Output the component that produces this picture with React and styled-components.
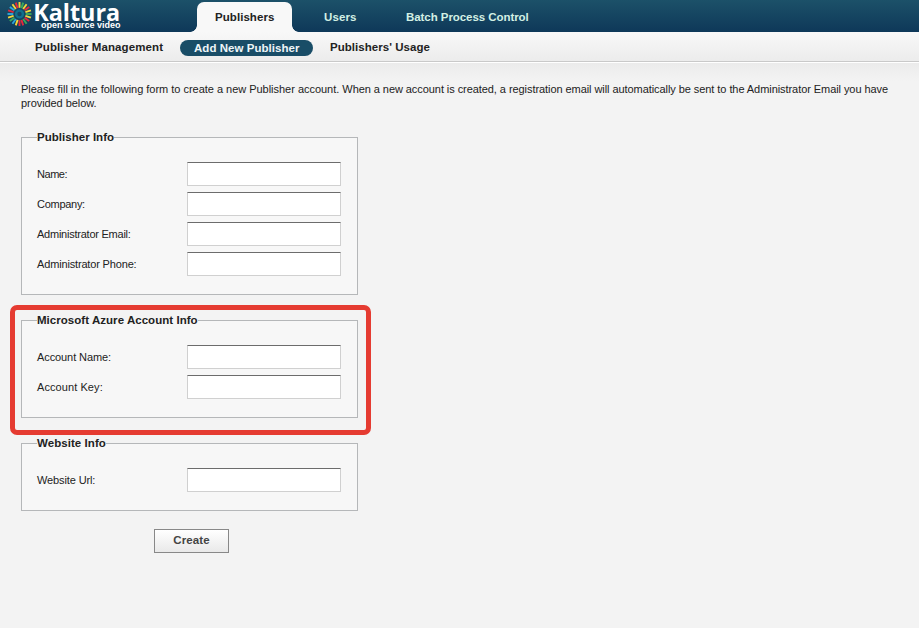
import React from "react";
import styled, { createGlobalStyle } from "styled-components";

const GlobalStyle = createGlobalStyle`
  * { box-sizing: border-box; }
  body {
    margin: 0;
    min-height: 628px;
    background: #f3f3f3;
    color: #222;
    font: 11px/14px "Liberation Sans", Arial, sans-serif;
  }
`;

const Header = styled.header`
  display: flex;
  height: 32px;
  background: linear-gradient(#1c5169, #0e3859);
`;

const Logo = styled.svg`
  display: block;
  flex: none;
  width: 186px;
  height: 32px;
`;

const TabList = styled.nav`
  display: flex;
  align-items: flex-end;
  padding-left: 11px;
`;

const Tab = styled.a`
  position: relative;
  width: ${(p) => p.$width}px;
  height: 30px;
  padding: 8px 0 0 ${(p) => p.$inset}px;
  border-radius: 7px 7px 0 0;
  font-size: 11.5px;
  font-weight: bold;
  white-space: nowrap;
  letter-spacing: ${(p) => p.$tracking}px;
  color: ${(p) => (p.$active ? "#222" : "#d3f0e4")};
  background: ${(p) => (p.$active ? "#f8f8f8" : "transparent")};

  &::before,
  &::after {
    content: "";
    display: ${(p) => (p.$active ? "block" : "none")};
    position: absolute;
    bottom: 0;
    width: 7px;
    height: 7px;
  }
  &::before {
    right: 100%;
    background: radial-gradient(circle at 0 0, transparent 6.5px, #f8f8f8 7.2px);
  }
  &::after {
    left: 100%;
    background: radial-gradient(circle at 100% 0, transparent 6.5px, #f8f8f8 7.2px);
  }
`;

const SubNav = styled.nav`
  display: flex;
  align-items: flex-start;
  height: 30px;
  padding: 8px 0 0 35px;
  background: linear-gradient(#f8f8f8, #ececec);
  border-bottom: 1px solid #c9c9c9;
`;

const SubLink = styled.a`
  width: ${(p) => p.$width}px;
  font-size: 11.5px;
  font-weight: bold;
  white-space: nowrap;
  letter-spacing: ${(p) => p.$tracking}px;
`;

const ActivePill = styled(SubLink)`
  height: 16px;
  margin-right: 17px;
  padding: 1px 0 0 14px;
  border-radius: 8px;
  color: #eef5f7;
  background: #194d67;
`;

const Content = styled.main`
  padding: 19px 20px 0 21px;
  border-top: 1px solid #fff;
  background: linear-gradient(#ebebeb, #f3f3f3 18px);
`;

const Intro = styled.p`
  width: 872px;
  margin: 0 0 21px;
`;

const Sentence = styled.span`
  letter-spacing: ${(p) => p.$tracking}px;
`;

const Form = styled.form`
  display: flex;
  flex-direction: column;
  gap: 19px;
  width: 337px;
`;

const Section = styled.div`
  position: relative;
`;

const Group = styled.fieldset`
  min-width: 0;
  margin: 0;
  padding: 0 16px 18px 15px;
  border: 1px solid #b5b7b9;
  background: #f7f7f7;
`;

const Legend = styled.legend`
  height: 13px;
  padding: 0;
  font-size: 11.5px;
  font-weight: bold;
  line-height: 13px;
  white-space: nowrap;
  letter-spacing: ${(p) => p.$tracking}px;
`;

const Fields = styled.div`
  display: grid;
  gap: 6px;
  padding-top: 18px;
`;

const Field = styled.label`
  display: grid;
  grid-template-columns: 150px 154px;
  align-items: center;
  height: 24px;
`;

const FieldName = styled.span`
  letter-spacing: ${(p) => p.$tracking}px;
`;

const Input = styled.input`
  width: 154px;
  height: 24px;
  padding: 2px 4px;
  border: 1px solid #d0d0d0;
  border-top-color: #6c6c6c;
  border-radius: 0;
  outline: none;
  background: #fff;
  font: inherit;
`;

const Highlight = styled.div`
  position: absolute;
  inset: -9.5px -13px -17px -11px;
  border: 5px solid #e53b31;
  border-radius: 7px;
  pointer-events: none;
`;

const CreateButton = styled.button`
  width: 75px;
  height: 24px;
  margin: -1px 0 0 133px;
  padding: 0 0 2px;
  border: 1px solid #888;
  border-radius: 0;
  color: #444;
  background: linear-gradient(#fff, #e9e9e9);
  font: bold 11.5px/14px "Liberation Sans", Arial, sans-serif;
  letter-spacing: 0.1px;
`;

const rayColors = ["#e4283c", "#f5d63b", "#38aa5a", "#2ba8dc"];
const rays = Array.from({ length: 20 }, (_, i) => ({
  angle: i * 18,
  color: rayColors[[1, 2, 1, 0, 1, 2, 1, 0, 2, 0, 0, 1, 3, 2, 1, 3, 0, 3, 1, 0][i]],
}));

const groups = [
  {
    title: "Publisher Info",
    tracking: 0.03,
    fields: [
      ["Name:", -0.45],
      ["Company:", -0.28],
      ["Administrator Email:", -0.24],
      ["Administrator Phone:", -0.16],
    ],
  },
  {
    title: "Microsoft Azure Account Info",
    tracking: 0.04,
    highlighted: true,
    fields: [
      ["Account Name:", -0.09],
      ["Account Key:", 0.08],
    ],
  },
  { title: "Website Info", tracking: 0.06, fields: [["Website Url:", -0.12]] },
];

function KalturaLogo() {
  return (
    <Logo viewBox="0 0 186 32" aria-label="Kaltura open source video">
      <g strokeWidth="1.9">
        {rays.map((ray) => (
          <line
            key={ray.angle}
            x1="19.5"
            x2="19.5"
            y1="7.8"
            y2="2"
            stroke={ray.color}
            transform={`rotate(${ray.angle} 19.5 14)`}
          />
        ))}
      </g>
      <circle cx="19.5" cy="14" r="3.4" fill="none" stroke="#11708d" strokeWidth="2.4" />
      <text
        x="33.2"
        y="21"
        fill="#fff"
        fontFamily="Open Sans, sans-serif"
        fontSize="22.5"
        fontWeight="700"
        textLength="87"
        lengthAdjust="spacingAndGlyphs"
      >
        Kaltura
      </text>
      <text
        x="41"
        y="28"
        fill="#fff"
        fontFamily="Liberation Sans, Arial, sans-serif"
        fontSize="9"
        fontWeight="bold"
        textLength="79.5"
        lengthAdjust="spacingAndGlyphs"
      >
        open source video
      </text>
    </Logo>
  );
}

export default function App() {
  return (
    <>
      <GlobalStyle />
      <Header>
        <KalturaLogo />
        <TabList>
          <Tab $active $width={95} $inset={18} $tracking={0.06}>Publishers</Tab>
          <Tab $width={82} $inset={32} $tracking={0.12}>Users</Tab>
          <Tab $width={160} $inset={32} $tracking={-0.06}>Batch Process Control</Tab>
        </TabList>
      </Header>
      <SubNav>
        <SubLink $width={145} $tracking={0.11}>Publisher Management</SubLink>
        <ActivePill $width={133} $tracking={0.04}>Add New Publisher</ActivePill>
        <SubLink $width={110} $tracking={0.04}>Publishers' Usage</SubLink>
      </SubNav>
      <Content>
        <Intro>
          <Sentence $tracking={-0.022}>
            Please fill in the following form to create a new Publisher account.{" "}
          </Sentence>
          <Sentence $tracking={-0.067}>
            When a new account is created, a registration email will automatically be sent to the
            Administrator Email you have provided below.
          </Sentence>
        </Intro>
        <Form onSubmit={(e) => e.preventDefault()}>
          {groups.map((group) => (
            <Section key={group.title}>
              <Group>
                <Legend $tracking={group.tracking}>{group.title}</Legend>
                <Fields>
                  {group.fields.map(([name, tracking]) => (
                    <Field key={name}>
                      <FieldName $tracking={tracking}>{name}</FieldName>
                      <Input type="text" />
                    </Field>
                  ))}
                </Fields>
              </Group>
              {group.highlighted && <Highlight />}
            </Section>
          ))}
          <CreateButton type="submit">Create</CreateButton>
        </Form>
      </Content>
    </>
  );
}
